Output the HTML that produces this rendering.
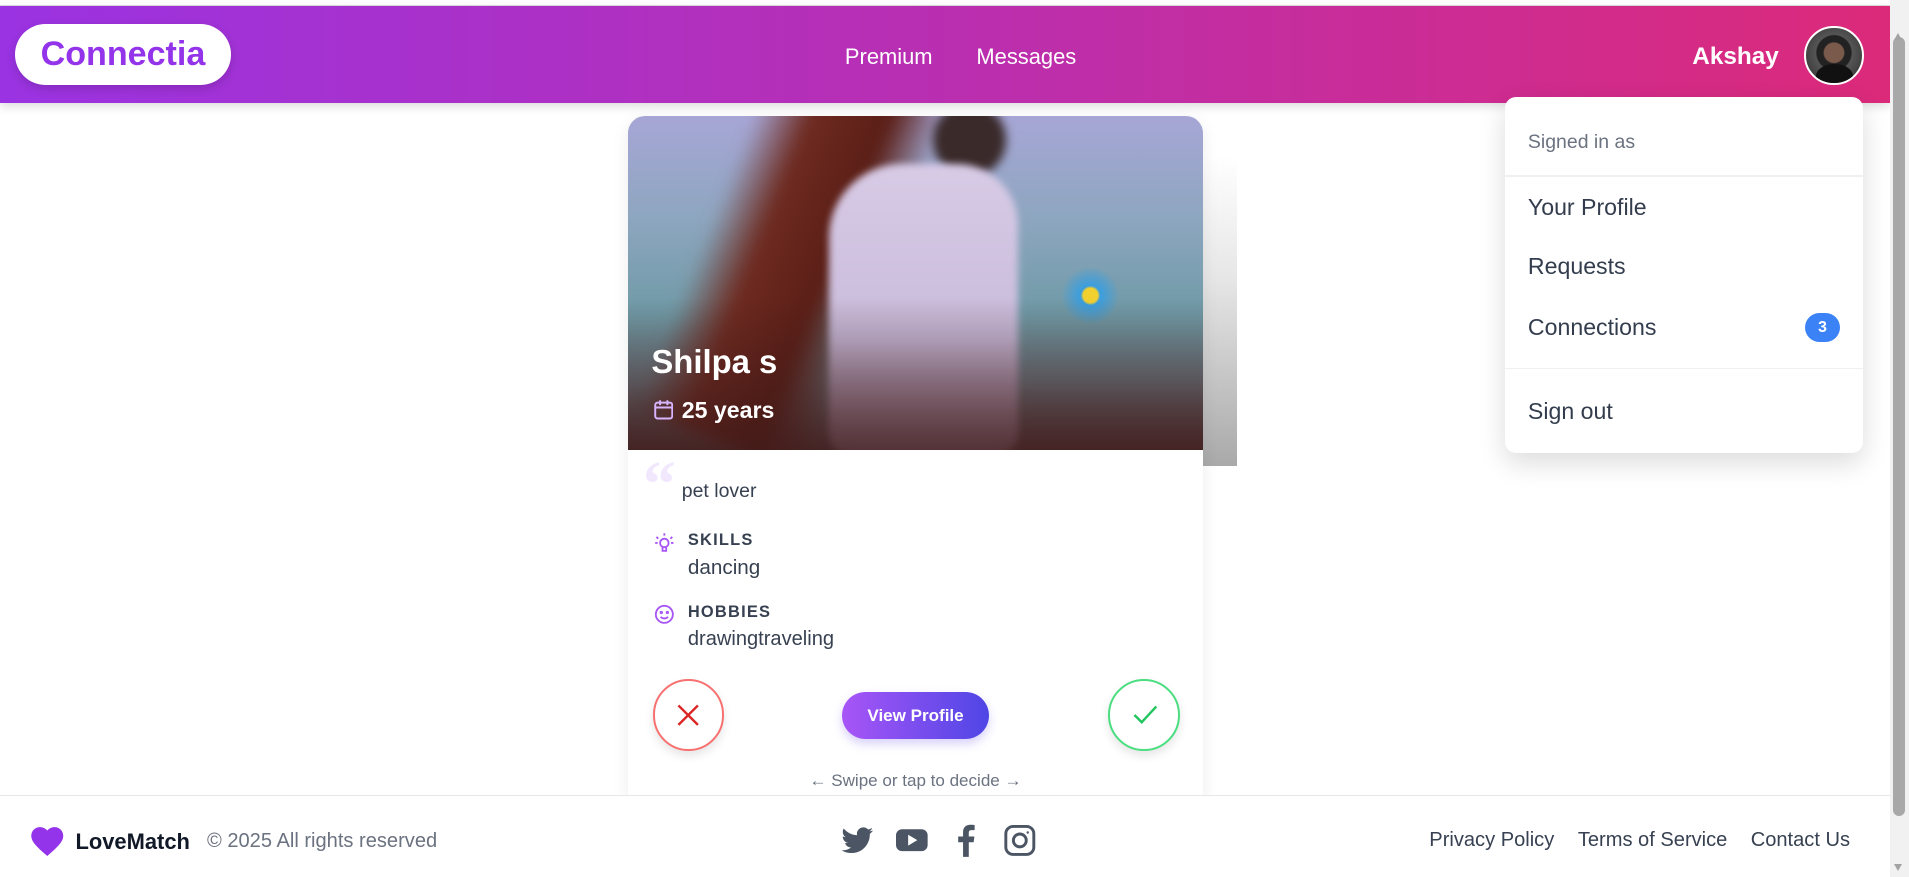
<!DOCTYPE html>
<html><head><meta charset="utf-8">
<style>
html{zoom:1.21747;}
*{box-sizing:border-box;margin:0;padding:0}
body{width:1568px;height:720px;overflow:hidden;background:#fff;font-family:"Liberation Sans",sans-serif;position:relative;color:#1f2937}
.abs{position:absolute}
.hdr{left:0;top:5px;width:1552px;height:80px;background:linear-gradient(90deg,#9a33e2,#b62fb6 45%,#dc2a7a);box-shadow:0 3px 8px rgba(0,0,0,.15)}
.topline{left:0;top:0;width:1552px;height:5px;background:#fff;border-bottom:1px solid #ddd}
.logo{left:12px;top:20px;width:178px;height:50px;border-radius:25px;background:#fff;color:#9333ea;font-weight:bold;font-size:28px;text-align:center;line-height:50px;box-shadow:0 3px 8px rgba(0,0,0,.15)}
.nav{color:#fff;font-size:18px;top:36px}
.sb{left:1552px;top:0;width:16px;height:720px;background:#f1f1f1}
.thumb{left:1555px;top:30px;width:10px;height:640px;border-radius:5px;background:#a8a8a8}
.dd{left:1236px;top:80px;width:294px;height:292px;background:#fff;border-radius:9px;box-shadow:0 8px 22px rgba(0,0,0,.14)}
.dd .it{position:absolute;left:19px;font-size:19px;color:#333d4d}
.card{left:516px;top:95px;width:472px;height:560px;background:#fff;border-radius:14px 14px 0 0;box-shadow:0 4px 14px rgba(0,0,0,.08);overflow:hidden}
.photo{position:absolute;left:0;top:0;width:472px;height:275px;overflow:hidden;background:linear-gradient(180deg,#a7a6d6 0,#8ea6c0 30%,#6f9aa6 60%,#6b7a82 80%,#5a3e3e 100%)}
.side{left:988px;top:128px;width:28px;height:255px;background:linear-gradient(180deg,#fff,#e6e6e6 40%,#a9a9a9)}
.lbl{font-size:14px;font-weight:bold;letter-spacing:1px;color:#374151}
.val{font-size:17px;color:#374151}
.foot{left:0;top:653px;width:1552px;height:67px;border-top:1px solid #e5e7eb;background:#fff}
.fl{font-size:17px;color:#374151;top:681px}
</style></head><body>
<div class="abs topline"></div>
<div class="abs hdr"></div>
<div class="abs logo">Connectia</div>
<div class="abs nav" style="left:694px">Premium</div>
<div class="abs nav" style="left:802px">Messages</div>
<div class="abs" style="left:1390px;top:35px;color:#fff;font-weight:bold;font-size:20px">Akshay</div>
<div class="abs" style="left:1482px;top:21px;width:49px;height:49px;border-radius:50%;border:2px solid #fff;background:radial-gradient(circle at 50% 45%,#7a5a4a 0 8px,#222 9px 14px,#555 15px,#2a2a2a 100%);overflow:hidden"><div style="position:absolute;left:8px;top:30px;width:30px;height:20px;border-radius:50% 50% 0 0;background:#111"></div></div>

<div class="abs side"></div>
<div class="abs card">
 <div class="photo">
  <div class="abs" style="left:60px;top:-40px;width:150px;height:320px;background:linear-gradient(90deg,rgba(110,40,30,0),#6e2a20 30%,#5a1e16 70%,rgba(90,30,22,0));transform:rotate(22deg);filter:blur(6px)"></div>
  <div class="abs" style="left:250px;top:-10px;width:60px;height:60px;border-radius:50%;background:#3a2a2a;filter:blur(4px)"></div>
  <div class="abs" style="left:165px;top:40px;width:155px;height:240px;border-radius:60px 50px 20px 20px;background:linear-gradient(180deg,#d8cbe6,#c9bbdb 60%,#8a6a78);filter:blur(3px)"></div>
  <div class="abs" style="left:355px;top:125px;width:50px;height:45px;border-radius:50%;background:radial-gradient(circle,#f2d030 0 6px,#3a9ee0 8px,rgba(58,158,224,0) 24px)"></div>
  <div class="abs" style="left:0;top:150px;width:472px;height:125px;background:linear-gradient(180deg,rgba(0,0,0,0),rgba(60,25,25,.7))"></div>
 </div>
 <div class="abs" style="left:19px;top:187px;color:#fff;font-weight:bold;font-size:27px">Shilpa s</div>
 <svg class="abs" style="left:21px;top:233px" width="16" height="17" viewBox="0 0 16 17" fill="none" stroke="#d8b4fe" stroke-width="1.6"><rect x="1" y="3" width="14" height="13" rx="2"/><path d="M1 7h14M5 1v4M11 1v4"/></svg>
 <div class="abs" style="left:44px;top:231px;color:#fff;font-weight:bold;font-size:19px">25 years</div>
 <div class="abs" style="left:12px;top:272px;font-size:54px;color:#f1e8fd;font-family:'Liberation Serif',serif;font-weight:bold">&ldquo;</div>
 <div class="abs val" style="left:44px;top:299px;font-size:16px">pet lover</div>
 <svg class="abs" style="left:21px;top:342px" width="17" height="19" viewBox="0 0 17 19" fill="none" stroke="#a855f7" stroke-width="1.5"><circle cx="8.5" cy="9" r="3.5"/><path d="M7 12.5v3h3v-3M8.5 1v2M2 4l1.5 1.5M15 4l-1.5 1.5M1 9h2M14 9h2"/></svg>
 <div class="abs lbl" style="left:49px;top:341px;font-size:13.5px">SKILLS</div>
 <div class="abs val" style="left:49px;top:362px">dancing</div>
 <svg class="abs" style="left:21px;top:401px" width="17" height="17" viewBox="0 0 17 17" fill="none" stroke="#a855f7" stroke-width="1.5"><circle cx="8.5" cy="8.5" r="7"/><path d="M5.5 10.5c1.5 1.8 4.5 1.8 6 0"/><circle cx="6" cy="7" r=".6"/><circle cx="11" cy="7" r=".6"/></svg>
 <div class="abs lbl" style="left:49px;top:400px;font-size:13.5px">HOBBIES</div>
 <div class="abs val" style="left:49px;top:421px;font-size:16.5px">drawingtraveling</div>
 <div class="abs" style="left:20px;top:463px;width:59px;height:59px;border-radius:50%;border:2px solid #f87171;background:#fff;box-shadow:0 4px 8px rgba(0,0,0,.1)"><svg style="position:absolute;left:18px;top:18px" width="20" height="20" viewBox="0 0 20 20" stroke="#dc2626" stroke-width="2"><path d="M2 2l16 16M18 2L2 18"/></svg></div>
 <div class="abs" style="left:176px;top:473px;width:120px;height:39px;border-radius:20px;background:linear-gradient(90deg,#a855f7,#4f46e5);color:#fff;font-weight:bold;font-size:14px;text-align:center;line-height:39px;box-shadow:0 4px 8px rgba(99,70,229,.25)">View Profile</div>
 <div class="abs" style="left:394px;top:463px;width:59px;height:59px;border-radius:50%;border:2px solid #4ade80;background:#fff;box-shadow:0 4px 8px rgba(0,0,0,.1)"><svg style="position:absolute;left:18px;top:19px" width="22" height="18" viewBox="0 0 22 18" fill="none" stroke="#22c55e" stroke-width="2"><path d="M2 9l6 6L20 2"/></svg></div>
 <div class="abs" style="left:0;width:472px;top:538px;text-align:center;font-size:14px;color:#6b7280">&larr; Swipe or tap to decide &rarr;</div>
</div>

<div class="abs dd">
 <div class="it" style="top:28px;font-size:16px;color:#6b7280">Signed in as</div>
 <div class="abs" style="left:0;top:64px;width:294px;height:1px;background:#f0f0f0"></div>
 <div class="it" style="top:79px">Your Profile</div>
 <div class="it" style="top:128px">Requests</div>
 <div class="it" style="top:178px">Connections</div>
 <div class="abs" style="left:247px;top:177px;width:28px;height:24px;border-radius:12px;background:#3b82f6;color:#fff;font-weight:bold;font-size:13px;text-align:center;line-height:24px">3</div>
 <div class="abs" style="left:0;top:222px;width:294px;height:1px;background:#f0f0f0"></div>
 <div class="it" style="top:247px">Sign out</div>
</div>

<div class="abs foot"></div>
<svg class="abs" style="left:24px;top:676px" width="30" height="28" viewBox="0 0 24 22"><path fill="#9333ea" d="M12 21.5l-1.5-1.3C5 15.3 1.5 12.1 1.5 8.2 1.5 5 4 2.5 7.2 2.5c1.8 0 3.5.8 4.8 2.2 1.3-1.4 3-2.2 4.8-2.2 3.2 0 5.7 2.5 5.7 5.7 0 3.9-3.5 7.1-9 12l-1.5 1.3z"/></svg>
<div class="abs" style="left:62px;top:681px;font-size:18px;font-weight:bold;color:#111827">LoveMatch</div>
<div class="abs" style="left:170px;top:682px;font-size:16.5px;color:#6b7280">© 2025 All rights reserved</div>
<svg class="abs" style="left:692px;top:679px" width="26" height="22" viewBox="0 0 24 20"><path fill="#4b5563" d="M23.6 2.4c-.9.4-1.8.6-2.8.8 1-.6 1.8-1.6 2.1-2.7-.9.6-2 1-3.1 1.2C18.9.7 17.6.1 16.2.1c-2.7 0-4.9 2.2-4.9 4.9 0 .4 0 .8.1 1.1C7.3 5.9 3.7 4 1.3 1 .9 1.7.6 2.6.6 3.5c0 1.7.9 3.2 2.2 4.1-.8 0-1.6-.3-2.2-.6v.1c0 2.400 1.7 4.4 3.9 4.8-.4.1-.8.2-1.3.2-.3 0-.6 0-.9-.1.6 2 2.4 3.4 4.6 3.4-1.7 1.3-3.8 2.1-6.1 2.1-.4 0-.8 0-1.2-.1 2.2 1.4 4.8 2.2 7.5 2.2 9.1 0 14-7.5 14-14v-.6c1-.7 1.8-1.6 2.5-2.6z"/></svg>
<svg class="abs" style="left:736px;top:680px" width="26" height="20" viewBox="0 0 26 20"><rect x="0" y="1" width="26" height="18" rx="5" fill="#4b5563"/><path d="M10 5.5v9l7.5-4.5z" fill="#fff"/></svg>
<svg class="abs" style="left:785px;top:677px" width="16" height="27" viewBox="0 0 16 27"><path fill="#4b5563" d="M10.5 27V15h4l.6-4.7h-4.6V7.3c0-1.3.4-2.3 2.3-2.3h2.5V.8C14.9.7 13.4.6 11.8.6 8.3.6 5.8 2.7 5.8 6.6v3.7H1.8V15h4v12z"/></svg>
<svg class="abs" style="left:825px;top:677px" width="26" height="27" viewBox="0 0 26 27" fill="none" stroke="#4b5563" stroke-width="2.4"><rect x="1.5" y="2" width="23" height="23" rx="6"/><circle cx="13" cy="13.5" r="5.3"/><circle cx="19.5" cy="7" r="1" fill="#4b5563" stroke="none"/></svg>
<div class="abs fl" style="left:1174px;font-size:16.5px">Privacy Policy</div>
<div class="abs fl" style="left:1296px;font-size:16.5px">Terms of Service</div>
<div class="abs fl" style="left:1438px;font-size:16.5px">Contact Us</div>

<div class="abs sb"></div>
<div class="abs thumb"></div>
<div class="abs" style="left:1556px;top:27px;width:0;height:0;border-left:4px solid transparent;border-right:4px solid transparent;border-bottom:6px solid #a3a3a3"></div>
<div class="abs" style="left:1556px;top:710px;width:0;height:0;border-left:4px solid transparent;border-right:4px solid transparent;border-top:6px solid #a3a3a3"></div>
</body></html>
